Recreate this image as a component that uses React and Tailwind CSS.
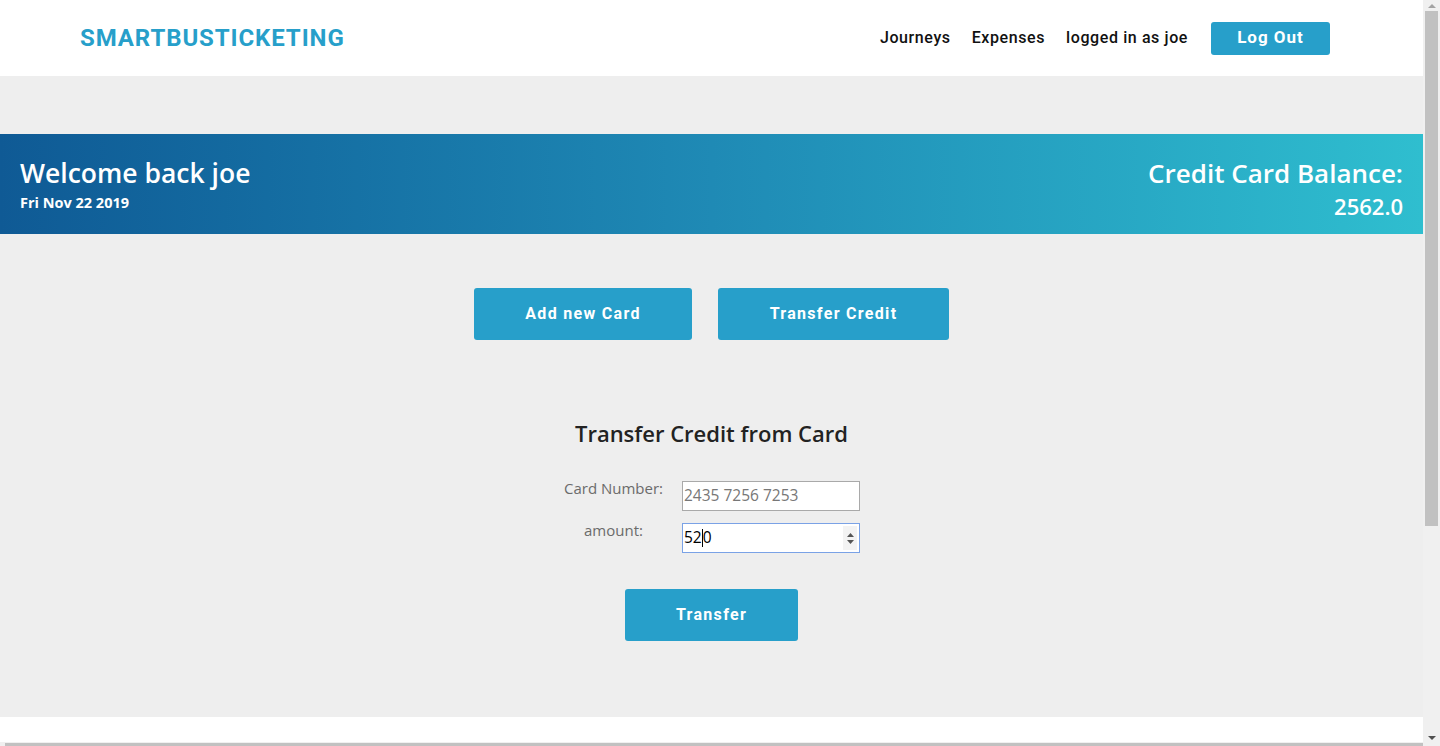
export default function App() {
  const seg = { fontFamily: '"Open Sans", "Noto Sans", sans-serif' };
  const rub = { fontFamily: 'Roboto, "Liberation Sans", sans-serif' };
  return (
    <div className="flex h-[746px] w-[1440px] overflow-hidden bg-[#eeeeee]">
      <div className="flex w-[1423px] flex-col">
        <header className="flex h-[76px] items-center justify-between bg-white pl-[80px] pr-[93px]" style={rub}>
          <div className="text-[24px] font-bold tracking-[0.9px] text-[#279fca]">SMARTBUSTICKETING</div>
          <nav className="flex items-center text-[16px] font-medium tracking-[0.6px] text-[#111]">
            <span className="mr-[21px]">Journeys</span>
            <span className="mr-[21px]">Expenses</span>
            <span className="mr-[23px]">logged in as joe</span>
            <button className="h-[33px] w-[119px] rounded-[3px] bg-[#279fca] text-[17px] font-bold tracking-[1px] text-white">Log Out</button>
          </nav>
        </header>
        <div className="flex flex-1 flex-col">
          <section className="mt-[58px] flex h-[100px] items-start justify-between bg-gradient-to-r from-[#0f5a95] via-[#1f8ab5] to-[#2fbecf] px-[20px] pt-[22px] text-white" style={seg}>
            <div>
              <div className="text-[26.5px] font-semibold leading-[34px]">Welcome back joe</div>
              <div className="mt-[3px] text-[14.5px] font-bold leading-[20px]">Fri Nov 22 2019</div>
            </div>
            <div className="text-right">
              <div className="text-[26px] font-semibold leading-[34px]">Credit Card Balance:</div>
              <div className="mt-[1px] text-[22px] font-semibold leading-[30px]">2562.0</div>
            </div>
          </section>
          <div className="mt-[54px] flex justify-center gap-[26px]" style={rub}>
            <button className="h-[52px] w-[218px] rounded-[3px] bg-[#279fca] text-[16px] font-bold tracking-[1.3px] text-white">Add new Card</button>
            <button className="h-[52px] w-[231px] rounded-[3px] bg-[#279fca] text-[16px] font-bold tracking-[1.3px] text-white">Transfer Credit</button>
          </div>
          <h2 className="mt-[77px] text-center text-[22px] font-semibold leading-[32px] text-[#222]" style={seg}>Transfer Credit from Card</h2>
          <div className="mt-[32px] flex flex-col items-center gap-[12px]" style={seg}>
            <div className="flex items-start">
              <div className="-mt-[2px] w-[101px] text-center text-[15px] leading-[18px] text-[#6b6b6b]">Card Number:</div>
              <div className="ml-[18px] flex h-[30px] w-[178px] items-center border border-[#a9a9a9] bg-white px-[1px] text-[15.5px] text-[#777]">2435 7256 7253</div>
            </div>
            <div className="flex items-start">
              <div className="-mt-[2px] w-[101px] text-center text-[15px] leading-[18px] text-[#6b6b6b]">amount:</div>
              <div className="ml-[18px] flex h-[30px] w-[178px] items-center border border-[#7aa2e6] bg-white pl-[1px] pr-[2px] text-[15.5px] text-black">
                <span>52</span>
                <span className="h-[18px] w-px bg-black"></span>
                <span>0</span>
                <span className="ml-auto flex h-[24px] w-[14px] flex-col items-center justify-center gap-[3px] bg-[#f3f3f3]">
                  <svg width="7" height="4" viewBox="0 0 7 4"><path d="M0 4 L3.5 0 L7 4 Z" fill="#555" /></svg>
                  <svg width="7" height="4" viewBox="0 0 7 4"><path d="M0 0 L3.5 4 L7 0 Z" fill="#555" /></svg>
                </span>
              </div>
            </div>
          </div>
          <div className="mt-[36px] flex justify-center" style={rub}>
            <button className="h-[52px] w-[173px] rounded-[3px] bg-[#279fca] text-[16px] font-bold tracking-[1.3px] text-white">Transfer</button>
          </div>
          <div className="flex-1"></div>
          <div className="h-[25px] bg-white"></div>
          <div className="h-[4px] bg-[#f0f0f0] pl-[5px] pt-[1px]"><div className="h-[3px] bg-[#c1c1c1]"></div></div>
        </div>
      </div>
      <div className="flex w-[17px] flex-col items-center bg-[#f0f0f0]">
        <div className="flex h-[11px] items-center justify-center">
          <svg width="8" height="4" viewBox="0 0 8 4"><path d="M0 4 L4 0 L8 4 Z" fill="#a3a3a3" /></svg>
        </div>
        <div className="h-[515px] w-[13px] bg-[#c1c1c1]"></div>
        <div className="flex-1"></div>
        <div className="flex h-[17px] items-center justify-center">
          <svg width="8" height="4" viewBox="0 0 8 4"><path d="M0 0 L4 4 L8 0 Z" fill="#505050" /></svg>
        </div>
      </div>
    </div>
  );
}
